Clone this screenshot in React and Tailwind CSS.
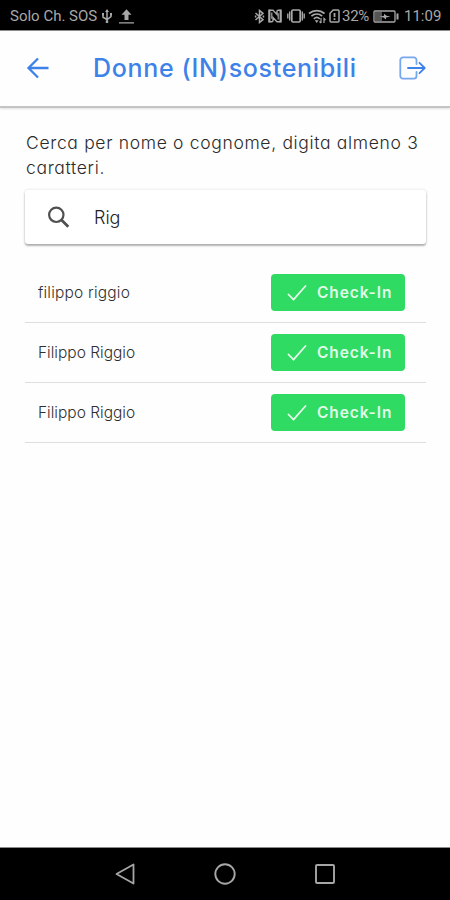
const guests = [
  { id: 1, name: "filippo riggio", spacing: "tracking-[0.2px]" },
  { id: 2, name: "Filippo Riggio", spacing: "tracking-[0px]" },
  { id: 3, name: "Filippo Riggio", spacing: "tracking-[0px]" },
];

function StatusBar() {
  return (
    <div className="h-[30px] shrink-0 bg-black text-[#a8a8a8] flex items-center justify-between pl-[10px] pr-[9px] pt-[2px] font-['Roboto',sans-serif] text-[15px] whitespace-nowrap">
      <div className="flex items-center">
        <span className="w-[89px]">Solo Ch. SOS</span>
        {/* USB */}
        <svg className="ml-[2px]" width="12" height="15" viewBox="0 0 12 15" fill="none" stroke="currentColor" strokeWidth="1.5">
          <path d="M6 2v11M2 5v3.2l4 2.3 4-3V5" />
          <path d="M6 0l2 3H4zM1 4h2v2.5H1zM9 4h2v2.5H9zM4.8 11.5h2.4v2.5H4.8z" fill="currentColor" stroke="none" />
        </svg>
        {/* Upload */}
        <svg className="ml-[6px]" width="15" height="15" viewBox="0 0 15 15" fill="currentColor">
          <path d="M7.5 0.2L12.5 5.8H9.5v5.2h-4V5.8h-3zM0 13.2h15v1.3H0z" />
        </svg>
      </div>

      <div className="flex items-center">
        {/* Bluetooth */}
        <svg width="11" height="15" viewBox="0 0 11 15" fill="none" stroke="currentColor" strokeWidth="1.5">
          <path d="M1.5 4l7.5 6.7L5.5 13.5v-12L9 4.3 1.5 11" />
          <path d="M0.8 6.5h1.6v2H0.8zM8.6 6.5h1.6v2H8.6z" fill="currentColor" stroke="none" />
        </svg>
        {/* NFC */}
        <svg className="ml-[3px]" width="14" height="14" viewBox="0 0 14 14" fill="none" stroke="currentColor">
          <path d="M1.3 13.5V.5M12.7.5v13" strokeWidth="2.2" />
          <path d="M1.5 1.2H5l4 4.3V2.5c0-.9.5-1.3 1.300-1.300H12.500M12.500 12.800H9L5 8.500v3c0 .9-.5 1.300-1.300 1.300H1.500" strokeWidth="1.4" />
          <path d="M3.800 3.500v6.300M10.200 4.200v6.300" strokeWidth="1.2" />
        </svg>
        {/* Vibrate */}
        <svg className="ml-[5px]" width="18" height="14" viewBox="0 0 18 14" fill="none" stroke="currentColor" strokeWidth="1.7">
          <rect x="4.8" y="1" width="8.4" height="12" rx="1.2" />
          <path d="M2.7 2.5v9M15.3 2.5v9M0.8 4.5v5M17.2 4.5v5" strokeWidth="1.4" />
        </svg>
        {/* Wi-Fi */}
        <svg className="ml-[3px]" width="18" height="15" viewBox="0 0 18 15" fill="none" stroke="currentColor" strokeWidth="1.7">
          <path d="M1 4.5C5.5 0.7 12 0.7 16.5 4.5M3.4 7.2c3.2-2.7 7.6-2.7 10.8 0M5.8 9.8c1.8-1.6 4.2-1.6 6 0" />
          <path d="M6.8 11.2h3.8L8.7 14z" fill="currentColor" stroke="none" />
          <path d="M13 9v5M11.5 12.5l1.5 1.5M16 14V9.5l1.5 1.5" strokeWidth="1.2" />
        </svg>
        {/* SIM warning */}
        <svg className="ml-[3px]" width="11" height="14" viewBox="0 0 11 14" fill="none" stroke="currentColor" strokeWidth="1.5">
          <path d="M4.2 1H9a1 1 0 0 1 1 1v10a1 1 0 0 1-1 1H2a1 1 0 0 1-1-1V4.2z" />
          <path d="M5.5 4v4M5.5 9.3V11" strokeWidth="1.8" />
        </svg>
        <span className="ml-[2px] w-[27px] tracking-[-0.3px]">32%</span>
        {/* Battery */}
        <svg className="ml-[4px]" width="26" height="13" viewBox="0 0 26 13" fill="none" stroke="currentColor" strokeWidth="1.3">
          <path d="M2 2h7v9H2z" fill="#555" stroke="none" />
          <rect x="1" y="1" width="21" height="11" rx="1" />
          <path d="M6.5 6.8l4.5-1V3.8l2.5 2 4 .6-4.5 1.2v2L10.5 7.5z" fill="currentColor" stroke="none" />
          <path d="M24.5 3.5v6" strokeWidth="2" />
        </svg>
        <span className="ml-[5px] w-[37px]">11:09</span>
      </div>
    </div>
  );
}

function Header() {
  return (
    <header className="h-[78px] shrink-0 flex items-center border-t border-t-[#8c8c8c] border-b-2 border-b-[#c4c4c4] shadow-[0_1px_2px_rgba(0,0,0,0.12)] text-[#3d82e8] pl-[26px] pr-[24px] pb-px">
      <svg width="24" height="22" viewBox="0 0 24 22" fill="none" stroke="currentColor" strokeWidth="2.3">
        <path d="M12 1.5L2.5 11l9.5 9.5M2.5 11H22.5" />
      </svg>
      <h1 className="flex-1 ml-[43px] pt-[2px] text-[25px] font-medium whitespace-nowrap tracking-[0.67px]">
        Donne (IN)sostenibili
      </h1>
      <svg width="27" height="24" viewBox="0 0 27 24" fill="none" stroke="currentColor" strokeWidth="1.8" strokeLinecap="round" strokeLinejoin="round">
        <path d="M17.5 8V4a2.7 2.7 0 0 0-2.7-2.7H4A2.7 2.7 0 0 0 1.3 4v16A2.7 2.7 0 0 0 4 22.7h10.8a2.7 2.7 0 0 0 2.7-2.7v-4" strokeOpacity="0.7" />
        <path d="M20.5 6.8l5.2 5.2-5.2 5.2M9 12h16" />
      </svg>
    </header>
  );
}

function CheckInButton() {
  return (
    <button className="w-[134px] h-[37px] mr-[21px] rounded-[4px] bg-[#2fdb62] text-[#e2fbe9] flex items-center pl-[16px] text-[15.5px] font-semibold tracking-[0.9px] whitespace-nowrap">
      <svg className="mr-[10px]" width="20" height="18" viewBox="0 0 20 18" fill="none" stroke="currentColor" strokeWidth="1.8" strokeLinecap="round" strokeLinejoin="round">
        <path d="M1.5 10.5l5 5.2L18.5 2" />
      </svg>
      <span className="pt-px">Check-In</span>
    </button>
  );
}

function NavBar() {
  return (
    <nav className="h-[53px] shrink-0 bg-black border-t border-[#8c8c8c] flex items-center justify-center gap-[79px] text-[#a6a6a6]">
      <svg width="20" height="22" viewBox="0 0 20 22" fill="none" stroke="currentColor" strokeWidth="1.8" strokeLinejoin="round">
        <path d="M18.5 1.5v19L1.5 11z" />
      </svg>
      <svg width="22" height="22" viewBox="0 0 22 22" fill="none" stroke="currentColor" strokeWidth="1.9">
        <circle cx="11" cy="11" r="9.7" />
      </svg>
      <svg width="20" height="20" viewBox="0 0 20 20" fill="none" stroke="currentColor" strokeWidth="1.9">
        <rect x="1" y="1" width="18" height="18" rx="1" />
      </svg>
    </nav>
  );
}

export default function App() {
  return (
    <div className="w-[450px] h-[900px] flex flex-col bg-[#fefefe] overflow-hidden font-['Inter',sans-serif] [font-feature-settings:'cv11']">
      <StatusBar />
      <Header />

      <main className="flex-1 px-[25px] pt-[22px]">
        <p className="pl-px text-[17.5px] leading-[25px] text-[#2a2a2a] font-light whitespace-nowrap tracking-[0.67px]">
          Cerca per nome o cognome, digita almeno 3
          <br />
          caratteri.
        </p>

        <div className="mt-[10px] h-[54px] w-[401px] flex items-center rounded-[3px] bg-white shadow-[0_2px_2px_rgba(0,0,0,0.28),0_0_3px_rgba(0,0,0,0.14)]">
          <svg className="ml-[22px]" width="24" height="24" viewBox="0 0 24 24" fill="none" stroke="#505050" strokeWidth="2.2">
            <circle cx="9.3" cy="9.8" r="7.2" />
            <path d="M14.3 14.8l7 7" strokeWidth="2.7" />
          </svg>
          <span className="ml-[23px] text-[18px] font-light text-[#222]">Rig</span>
        </div>

        <ul className="mt-[19px]">
          {guests.map((guest) => (
            <li
              key={guest.id}
              className="h-[60px] w-[401px] pl-[13px] flex items-center justify-between border-b border-[#dedede] text-[15.5px] font-light text-[#303030]"
            >
              <span className={guest.spacing}>{guest.name}</span>
              <CheckInButton />
            </li>
          ))}
        </ul>
      </main>

      <NavBar />
    </div>
  );
}
